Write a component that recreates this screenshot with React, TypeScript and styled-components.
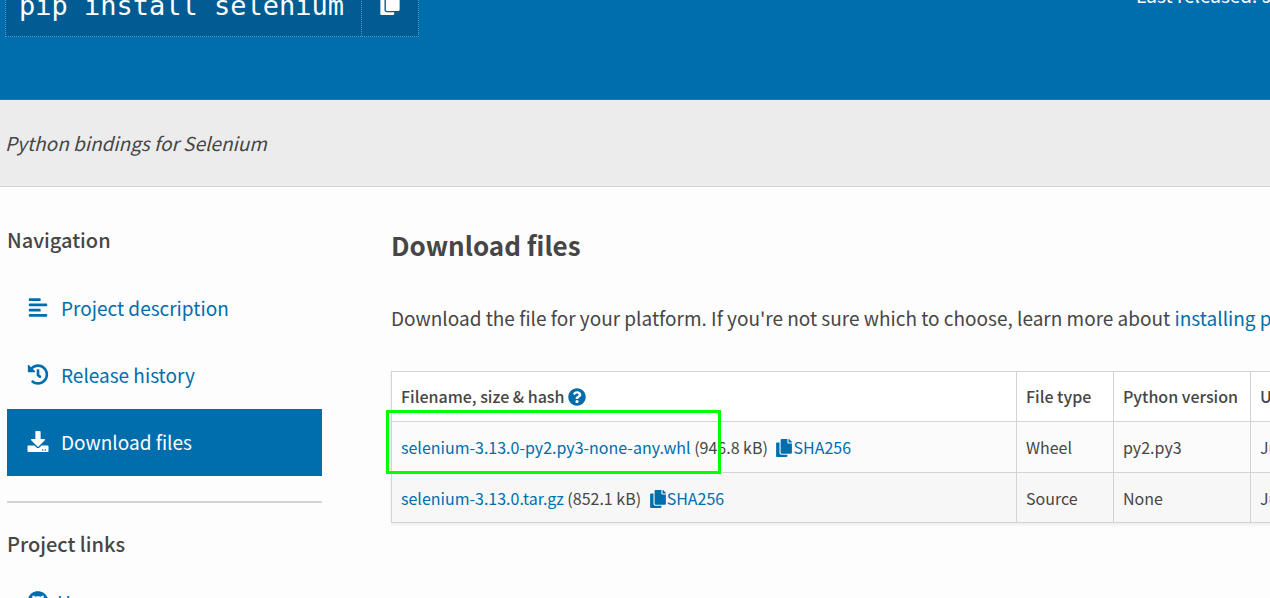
import React from 'react';
import styled, { createGlobalStyle } from 'styled-components';
import { FaAlignLeft, FaHistory, FaDownload, FaQuestionCircle, FaCopy, FaGithub } from 'react-icons/fa';

const Global = createGlobalStyle`
  * { box-sizing: border-box; }
  html { overflow: hidden; }
  body {
    margin: 0;
    background: #fdfdfd;
    color: #464646;
    font: 400 19px/30px "Noto Sans CJK SC", sans-serif;
  }
  h2, h3, p, ul { margin: 0; padding: 0; }
  a { color: #006dad; text-decoration: none; }
`;

const Page = styled.div`
  height: 100vh;
  overflow: hidden;
`;

const Banner = styled.header`
  display: flex;
  justify-content: space-between;
  align-items: flex-start;
  height: 100px;
  padding-left: 5px;
  background: #006dad;
  color: #fff;
  border-bottom: 1px solid #2a76a2;
  overflow: hidden;
`;

const PipCommand = styled.div`
  display: flex;
  height: 63px;
  margin-top: -26px;
  background: #005c92;
  border: 1px dotted #4f9fd0;
`;

const PipText = styled.code`
  width: 355px;
  padding: 15px 0 0 13px;
  font: 400 27px/32px "DejaVu Sans Mono", monospace;
  white-space: pre;
`;

const CopyButton = styled.button`
  width: 57px;
  padding: 0 0 4px;
  border: 0;
  border-left: 1px dotted #4f9fd0;
  background: transparent;
  color: #fff;
  font-size: 22px;
  line-height: 1;
  text-align: center;
  svg { display: inline-block; vertical-align: middle; }
`;

const Released = styled.p`
  width: 134px;
  margin-top: -20px;
  white-space: nowrap;
`;

const Summary = styled.section`
  height: 87px;
  padding: 28px 5px;
  background: #ececec;
  border-bottom: 1px solid #d3d3d3;
  font-style: italic;
`;

const Body = styled.div`
  display: flex;
  gap: 69px;
  padding-left: 7px;
`;

const Sidebar = styled.aside`
  flex: 0 0 315px;
  padding-top: 38px;
`;

const SideTitle = styled.h3`
  font-size: 20px;
  line-height: 30px;
  font-weight: 500;
`;

const NavList = styled.ul<{ $tight?: boolean }>`
  margin-top: ${(p) => (p.$tight ? '10px' : '20px')};
  list-style: none;
`;

const NavLink = styled.a<{ $active?: boolean; $tight?: boolean }>`
  display: flex;
  align-items: center;
  gap: ${(p) => (p.$tight ? '8px' : '12px')};
  height: 67px;
  padding: 0 0 2px 20px;
  background: ${(p) => (p.$active ? '#006dad' : 'transparent')};
  color: ${(p) => (p.$active ? '#fff' : '#006dad')};
  svg { width: 22px; height: 21px; }
`;

const Rule = styled.hr`
  height: 2px;
  margin: 25px 0 26px;
  border: 0;
  background: #d3d3d3;
`;

const Main = styled.main`
  flex: 1 0 0;
  min-width: 0;
  padding-top: 39px;
`;

const Title = styled.h2`
  font-size: 26px;
  line-height: 38px;
  font-weight: 700;
`;

const Intro = styled.p`
  margin: 39px 0 38px;
  white-space: nowrap;
`;

const FileTable = styled.table`
  width: 1040px;
  table-layout: fixed;
  border-collapse: collapse;
  background: #fff;
  font-size: 16px;
  line-height: 24px;
  box-shadow: 0 2px 3px #eee;
  th, td {
    height: 50px;
    padding: 0 9px;
    border: 1px solid #d3d3d3;
    text-align: left;
    white-space: nowrap;
  }
  th { padding-bottom: 2px; font-weight: 500; }
  svg { width: 18px; height: 18px; vertical-align: -3px; }
`;

const Row = styled.tr<{ $shade: string; $tall: boolean }>`
  background: ${(p) => p.$shade};
  && td { height: ${(p) => (p.$tall ? '51px' : '50px')}; }
`;

const FileCell = styled.td`
  position: relative;
`;

const HashLink = styled.a`
  margin-left: 4px;
`;

const Highlight = styled.span`
  position: absolute;
  left: -6px;
  top: -12px;
  width: 335px;
  height: 64px;
  border: 3px solid #0f0;
  pointer-events: none;
`;

const files = [
  { name: 'selenium-3.13.0-py2.py3-none-any.whl', size: '946.8 kB', type: 'Wheel', py: 'py2.py3', marked: true },
  { name: 'selenium-3.13.0.tar.gz', size: '852.1 kB', type: 'Source', py: 'None', marked: false },
];

export default function App() {
  return (
    <Page>
      <Global />
      <Banner>
        <PipCommand>
          <PipText>pip install selenium</PipText>
          <CopyButton aria-label="Copy pip command"><FaCopy /></CopyButton>
        </PipCommand>
        <Released>Last released: Jun 2018</Released>
      </Banner>
      <Summary>Python bindings for Selenium</Summary>
      <Body>
        <Sidebar>
          <SideTitle>Navigation</SideTitle>
          <NavList>
            <li><NavLink href="#description"><FaAlignLeft />Project description</NavLink></li>
            <li><NavLink href="#history"><FaHistory />Release history</NavLink></li>
            <li><NavLink href="#files" $active><FaDownload />Download files</NavLink></li>
          </NavList>
          <Rule />
          <SideTitle>Project links</SideTitle>
          <NavList $tight>
            <li><NavLink href="#home" $tight><FaGithub />Homepage</NavLink></li>
          </NavList>
        </Sidebar>
        <Main>
          <Title>Download files</Title>
          <Intro>
            Download the file for your platform. If you're not sure which to choose, learn more about{' '}
            <a href="#installing">installing packages</a>.
          </Intro>
          <FileTable>
            <colgroup>
              <col style={{ width: 625 }} />
              <col style={{ width: 97 }} />
              <col style={{ width: 137 }} />
              <col />
            </colgroup>
            <thead>
              <tr>
                <th>Filename, size &amp; hash <a href="#help" aria-label="Hash help"><FaQuestionCircle /></a></th>
                <th>File type</th>
                <th>Python version</th>
                <th>Upload date</th>
              </tr>
            </thead>
            <tbody>
              {files.map((f, i) => (
                <Row key={f.name} $shade={i ? '#f7f7f7' : '#fbfbfb'} $tall={f.marked}>
                  <FileCell>
                    <a href="#file">{f.name}</a> ({f.size}) <HashLink href="#hash"><FaCopy />SHA256</HashLink>
                    {f.marked && <Highlight />}
                  </FileCell>
                  <td>{f.type}</td>
                  <td>{f.py}</td>
                  <td>Jun 25, 2018</td>
                </Row>
              ))}
            </tbody>
          </FileTable>
        </Main>
      </Body>
    </Page>
  );
}
